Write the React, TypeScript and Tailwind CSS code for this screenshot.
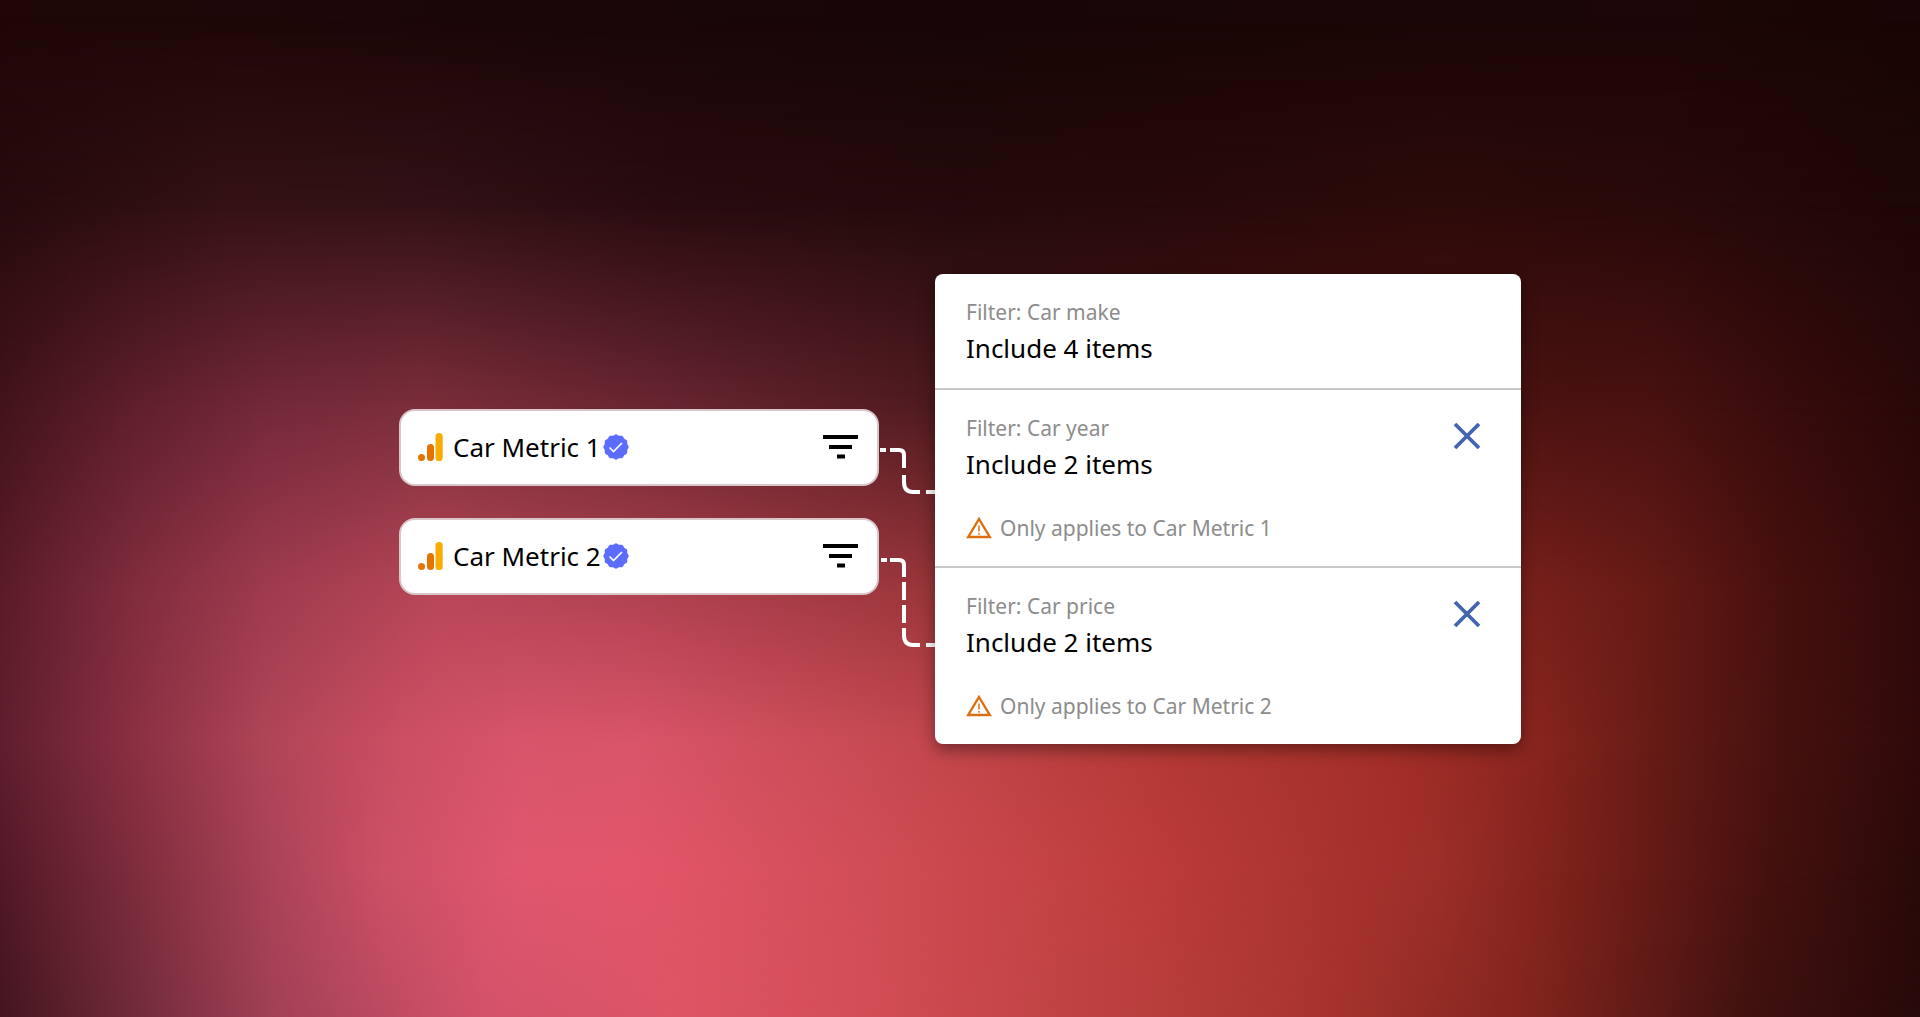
function AnalyticsIcon() {
  return (
    <svg viewBox="0 0 26 30" className="h-[30px] w-[26px] shrink-0" aria-hidden="true">
      <circle cx="4.5" cy="25.5" r="3.5" fill="#e37400" />
      <rect x="10" y="12" width="7" height="17" rx="3.5" fill="#e37400" />
      <rect x="18.5" y="1" width="7.2" height="28" rx="3.6" fill="#f9ab00" />
    </svg>
  );
}

const SEAL =
  "M" +
  Array.from({ length: 97 }, (_, i) => {
    const a = (i / 96) * Math.PI * 2;
    const r = 12.2 + 0.5 * Math.cos(a * 12);
    return `${(13 + r * Math.sin(a)).toFixed(2)} ${(13 - r * Math.cos(a)).toFixed(2)}`;
  }).join("L") +
  "Z";

function VerifiedIcon() {
  return (
    <svg viewBox="0 0 26 26" className="size-[26px] shrink-0" role="img" aria-label="Verified">
      <path d={SEAL} fill="#5b6cff" />
      <path d="M6.5 13.5l4 4 8.500-8.500" fill="none" stroke="#fff" strokeWidth="1.6" />
    </svg>
  );
}

function FilterIcon() {
  return (
    <svg viewBox="0 0 36 24" className="h-6 w-9" aria-hidden="true">
      <path d="M0 0h35v4H0zM6 10h23v4H6zM14 19.5h8v4h-8z" fill="#000" />
    </svg>
  );
}

function WarningIcon() {
  return (
    <svg viewBox="0 0 26 22" className="h-[22px] w-[26px] shrink-0" aria-hidden="true">
      <path d="M13 2L23.800 20H2.200z" fill="none" stroke="#dd6f10" strokeWidth="2.4" />
      <path d="M13 8.500v6M13 16v1.800" fill="none" stroke="#dd6f10" strokeWidth="1.5" />
    </svg>
  );
}

function CloseIcon() {
  return (
    <svg viewBox="0 0 28 28" className="size-7" aria-hidden="true">
      <path d="M2 2l24 24M26 2l-24 24" fill="none" stroke="#4463b0" strokeWidth="3.8" />
    </svg>
  );
}

function MetricCard({ name }: { name: string }) {
  return (
    <div className="flex h-[77px] items-center rounded-2xl border-2 border-[#d9c6c9] bg-white pr-[18px] pl-4">
      <AnalyticsIcon />
      <span className="ml-2.5 text-[26px] leading-8 text-black">{name}</span>
      <span className="ml-0.5 flex">
        <VerifiedIcon />
      </span>
      <button type="button" aria-label={`Filters for ${name}`} className="ml-auto">
        <FilterIcon />
      </button>
    </div>
  );
}

function FilterRow({ field, value, note }: { field: string; value: string; note?: string }) {
  return (
    <section className="relative px-[31px] py-6">
      <p className="text-[21px] leading-7 text-[#8c8c8c]">Filter: {field}</p>
      <p className="mt-1.5 text-[26px] leading-8 text-black">{value}</p>
      {note && (
        <>
          <p className="mt-[34px] flex items-center gap-2 text-[21px] leading-7 text-[#8c8c8c]">
            <WarningIcon />
            {note}
          </p>
          <button type="button" aria-label={`Remove ${field} filter`} className="absolute top-8 right-10">
            <CloseIcon />
          </button>
        </>
      )}
    </section>
  );
}

function Backdrop() {
  return (
    <div className="absolute inset-0" aria-hidden="true">
      <div className="absolute inset-0 bg-[linear-gradient(90deg,#1f0708,#1e0708_12%,#1b0607_25%,#190607_37%,#180606_50%,#190606_62%,#1b0607_75%,#1c0607_87%,#190505)]" />
      <div className="absolute inset-0 bg-[linear-gradient(90deg,#260a0d,#341115_12%,#321116_22%,#280b0f_35%,#230a0c_50%,#28090a_62%,#2c0b09_75%,#290909_87%,#1e0707)] [mask-image:linear-gradient(180deg,transparent_2%,#000_20%)]" />
      <div className="absolute inset-0 bg-[linear-gradient(90deg,#42131b,#5f1f2b_7%,#74293a_14%,#7c2e3a_22%,#672530_35%,#4d1a1d_50%,#481614_62%,#4c1310_75%,#491211_86%,#380c0c_93%,#290808)] [mask-image:linear-gradient(180deg,transparent_20%,#000_40%)]" />
      <div className="absolute inset-0 bg-[linear-gradient(90deg,#5a1b29,#802d3d_7%,#9f3b4e_14%,#b84759_23%,#b04150_34%,#983538_50%,#8c2b29_62%,#862420_75%,#661b15_86%,#45100e_93%,#300a0a)] [mask-image:linear-gradient(180deg,transparent_40%,#000_58%)]" />
      <div className="absolute inset-0 bg-[linear-gradient(90deg,#5e1e2e,#8a3042_7%,#b04558_14%,#cc4f63_21%,#d8556a_27%,#d95568_33%,#c84b54_45%,#b43a36_60%,#a52f29_72%,#8e2620_79%,#661c15_86%,#45110f_93%,#300a0a)] [mask-image:linear-gradient(180deg,transparent_58%,#000_73%)]" />
      <div className="absolute inset-0 bg-[linear-gradient(90deg,#521827,#83303f_8%,#aa4257_14%,#cc5066_20%,#e0576e_27%,#e3566a_33%,#d04d55_46%,#bd3c3a_60%,#9c2e28_75%,#7a211a_82%,#45110f_92%,#290a08)] [mask-image:linear-gradient(180deg,transparent_73%,#000_86%)]" />
      <div className="absolute inset-0 bg-[linear-gradient(90deg,#43151f,#702b39_7%,#a04055_14%,#d2526a_25%,#dd5565_35%,#d34d56_45%,#c04444_55%,#aa352f_68%,#80241d_80%,#401210_91%,#280909)] [mask-image:linear-gradient(180deg,transparent_86%,#000_100%)]" />
    </div>
  );
}

function Connectors() {
  return (
    <svg viewBox="0 0 56 469" className="h-[469px] w-14" fill="none" stroke="#fff" strokeWidth="4" aria-hidden="true">
      <path d="M1 176h6M11 176h9q5 0 5 5v13M25 201v7q0 10 9 10h7M47 218h9" />
      <path d="M2 286h6M11 286h9q5 0 5 5v12M25 308v18M25 331v18M25 354v7q0 10 9 10h7M47 371h9" />
    </svg>
  );
}

export default function App() {
  return (
    <main className="relative isolate flex min-h-screen items-center justify-center overflow-hidden bg-[#1a0606] font-['Noto_Sans',sans-serif]">
      <Backdrop />
      <div className="relative flex items-center">
        <div className="flex w-[480px] flex-col gap-8 pb-3.5">
          <MetricCard name="Car Metric 1" />
          <MetricCard name="Car Metric 2" />
        </div>
        <Connectors />
        <div className="w-[586px] divide-y-2 divide-[#c8c8c8] rounded-lg bg-white shadow-[0_6px_16px_rgba(0,0,0,0.4)]">
          <FilterRow field="Car make" value="Include 4 items" />
          <FilterRow field="Car year" value="Include 2 items" note="Only applies to Car Metric 1" />
          <FilterRow field="Car price" value="Include 2 items" note="Only applies to Car Metric 2" />
        </div>
      </div>
    </main>
  );
}
